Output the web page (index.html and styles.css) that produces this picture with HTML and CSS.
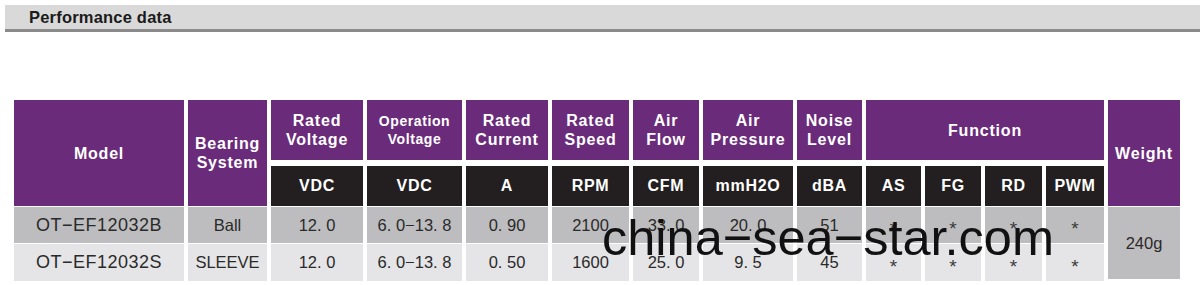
FILE: index.html
```html
<!DOCTYPE html>
<html>
<head>
<meta charset="utf-8">
<link rel="stylesheet" href="styles.css">
</head>
<body>
<div class="titlebar"><span class="title">Performance data</span></div>
<div class="wrap">
  <div class="grid">
    <div class="h tall">Model</div>
    <div class="h tall">Bearing<br>System</div>
    <div class="h">Rated<br>Voltage</div>
    <div class="h small">Operation<br>Voltage</div>
    <div class="h">Rated<br>Current</div>
    <div class="h">Rated<br>Speed</div>
    <div class="h">Air<br>Flow</div>
    <div class="h">Air<br>Pressure</div>
    <div class="h">Noise<br>Level</div>
    <div class="h func">Function</div>
    <div class="h tall">Weight</div>

    <div class="u">VDC</div>
    <div class="u">VDC</div>
    <div class="u">A</div>
    <div class="u">RPM</div>
    <div class="u">CFM</div>
    <div class="u">mmH2O</div>
    <div class="u">dBA</div>
    <div class="u">AS</div>
    <div class="u">FG</div>
    <div class="u">RD</div>
    <div class="u">PWM</div>

    <div class="d d1 model">OT−EF12032B</div>
    <div class="d d1">Ball</div>
    <div class="d d1">12. 0</div>
    <div class="d d1">6. 0−13. 8</div>
    <div class="d d1">0. 90</div>
    <div class="d d1">2100</div>
    <div class="d d1">33. 0</div>
    <div class="d d1">20. 0</div>
    <div class="d d1">51</div>
    <div class="d d1 star">*</div>
    <div class="d d1 star">*</div>
    <div class="d d1 star">*</div>
    <div class="d d1 star">*</div>
    <div class="d weight">240g</div>

    <div class="d d2 model">OT−EF12032S</div>
    <div class="d d2">SLEEVE</div>
    <div class="d d2">12. 0</div>
    <div class="d d2">6. 0−13. 8</div>
    <div class="d d2">0. 50</div>
    <div class="d d2">1600</div>
    <div class="d d2">25. 0</div>
    <div class="d d2">9. 5</div>
    <div class="d d2">45</div>
    <div class="d d2 star">*</div>
    <div class="d d2 star">*</div>
    <div class="d d2 star">*</div>
    <div class="d d2 star">*</div>
  </div>
  <div class="watermark">china−sea−star.com</div>
</div>
</body>
</html>
```
FILE: styles.css
```css
html, body {
  margin: 0;
  padding: 0;
  background: #ffffff;
  font-family: "Liberation Sans", Arial, sans-serif;
}

.titlebar {
  margin: 5px 0 0 5px;
  height: 24px;
  background: #d9d9d9;
  border-bottom: 3px solid #8a8a8a;
  display: flex;
  align-items: center;
  padding-left: 24px;
}

.title {
  font-size: 16.5px;
  font-weight: bold;
  color: #1b1b1b;
  letter-spacing: 0.2px;
}

.wrap {
  position: relative;
  margin: 68px 0 0 14px;
  width: 1166px;
}

.grid {
  display: grid;
  grid-template-columns: 170px 79px 92px 95px 82px 77px 66px 90px 65px 55px 56px 57px 58px 72px;
  grid-template-rows: 66px 41px 37px 37px;
  column-gap: 4px;
  row-gap: 0;
}

.h {
  background: #6a2b7a;
  color: #ffffff;
  font-weight: bold;
  font-size: 16px;
  line-height: 19px;
  letter-spacing: 0.8px;
  text-align: center;
  display: flex;
  align-items: center;
  justify-content: center;
  margin-bottom: 6px;
}

.h.small {
  font-size: 14px;
  line-height: 18px;
  letter-spacing: 0.6px;
}

.h.tall {
  grid-row: span 2;
  margin-bottom: 1px;
}

.h.func {
  grid-column: span 4;
}

.u {
  background: #231f20;
  color: #ffffff;
  font-weight: bold;
  font-size: 16px;
  letter-spacing: 0.7px;
  display: flex;
  align-items: center;
  justify-content: center;
  margin-bottom: 1px;
}

.d {
  color: #2a2a2a;
  font-size: 16.5px;
  display: flex;
  align-items: center;
  justify-content: center;
}

.d1 {
  background: #bdbdbf;
  margin-bottom: 1px;
}

.d2 {
  background: #e5e5e7;
}

.model {
  font-size: 18px;
  letter-spacing: 0.5px;
}

.star {
  font-size: 19px;
  padding-top: 8px;
  box-sizing: border-box;
  color: #3a3a3a;
}

.weight {
  grid-row: span 2;
  background: #bdbdbf;
  margin-bottom: 2px;
}

.watermark {
  position: absolute;
  left: 588px;
  top: 113px;
  font-size: 50.5px;
  line-height: 50px;
  color: #111111;
  white-space: nowrap;
}
```
